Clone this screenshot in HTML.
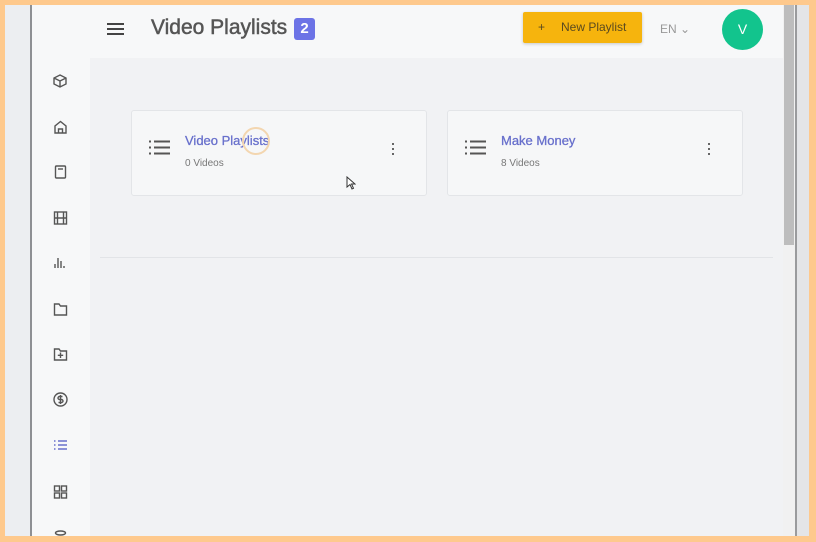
<!DOCTYPE html>
<html><head><style>
*{margin:0;padding:0;box-sizing:border-box}
body{width:816px;height:542px;background:#fec98d;position:relative;overflow:hidden;font-family:"Liberation Sans",sans-serif}
.frame{position:absolute;left:5px;top:5px;width:804px;height:531px;background:#eceef1}
.line{position:absolute;left:30px;top:5px;width:2px;height:531px;background:#8e9094}
.side{position:absolute;left:32px;top:5px;width:58px;height:531px;background:#f7f8f9}
.hdr{position:absolute;left:90px;top:5px;width:693px;height:53px;background:#f7f8f9}
.main{position:absolute;left:90px;top:58px;width:693px;height:478px;background:#f1f2f4}
.sb{position:absolute;left:783px;top:5px;width:12px;height:531px;background:#f1f1f1}
.thumb{position:absolute;left:784px;top:5px;width:10px;height:240px;background:#bdbdbd}
.sbl{position:absolute;left:795px;top:5px;width:2px;height:531px;background:#9a9b9d}
.rgt{position:absolute;left:797px;top:5px;width:12px;height:531px;background:#e4e5e7}
.title{position:absolute;left:151px;top:16px;font-size:21px;color:#555;font-weight:normal;-webkit-text-stroke:0.5px #555}
.badge{position:absolute;left:294px;top:18px;width:21px;height:22px;background:#6c73e6;color:#fff;border-radius:3px;font-size:15px;font-weight:bold;text-align:center;line-height:22px}
.btn{position:absolute;left:523px;top:12px;width:119px;height:31px;background:#f6b40d;border-radius:2px;font-size:12px;color:#5a4a20;line-height:31px;box-shadow:0 1px 3px rgba(0,0,0,.2)}
.en{position:absolute;left:660px;top:22px;font-size:12px;color:#999}
.av{position:absolute;left:722px;top:9px;width:41px;height:41px;border-radius:50%;background:#12c48d;color:#fff;text-align:center;line-height:41px;font-size:14px}
.card{position:absolute;top:110px;height:86px;background:#f6f7f8;border:1px solid #e3e5e8;border-radius:3px}
.ct{position:absolute;top:22px;font-size:13px;color:#6870cc;font-weight:normal;-webkit-text-stroke:0.3px #6870cc}
.cs{position:absolute;top:47px;font-size:10px;color:#777}
.hr{position:absolute;left:100px;top:257px;width:673px;height:1px;background:#e2e4e7}
</style></head><body>
<div class="frame"></div><div class="line"></div><div class="side"></div>
<div class="hdr"></div><div class="main"></div>
<div class="sb"></div><div class="thumb"></div><div class="sbl"></div><div class="rgt"></div>
<svg style="position:absolute;left:107px;top:22px" width="17" height="14"><path d="M0 2H17M0 7H17M0 12H17" stroke="#444" stroke-width="2"/></svg>
<div class="title">Video Playlists</div><div class="badge">2</div>
<div class="btn"><span style="position:absolute;left:15px">+</span><span style="position:absolute;left:38px">New Playlist</span></div>
<div class="en">EN &#8964;</div>
<div class="av">V</div>
<div class="card" style="left:131px;width:296px">
<svg style="position:absolute;left:17px;top:29px" width="21" height="15"><path d="M0 1.5H2M0 7.5H2M0 13.5H2M5 1.5H21M5 7.5H21M5 13.5H21" stroke="#555" stroke-width="2"/></svg>
<div class="ct" style="left:53px">Video Playlists</div>
<div style="position:absolute;left:110px;top:16px;width:28px;height:28px;border:2px solid #f3d6b0;border-radius:50%"></div>
<div class="cs" style="left:53px">0 Videos</div>
<div style="position:absolute;left:260px;top:32px;width:2px;height:12px;background:repeating-linear-gradient(#666 0 2px,transparent 2px 5px)"></div>
</div>
<div class="card" style="left:447px;width:296px">
<svg style="position:absolute;left:17px;top:29px" width="21" height="15"><path d="M0 1.5H2M0 7.5H2M0 13.5H2M5 1.5H21M5 7.5H21M5 13.5H21" stroke="#555" stroke-width="2"/></svg>
<div class="ct" style="left:53px">Make Money</div>
<div class="cs" style="left:53px">8 Videos</div>
<div style="position:absolute;left:260px;top:32px;width:2px;height:12px;background:repeating-linear-gradient(#666 0 2px,transparent 2px 5px)"></div>
</div>
<svg style="position:absolute;left:346px;top:176px" width="10" height="14"><path d="M1 1L1 11L4 8.5L6 13L7.5 12.3L5.5 8L9 8Z" fill="#fff" stroke="#333"/></svg>
<div class="hr"></div>
<svg width="90" height="542" style="position:absolute;left:0;top:0" fill="none" stroke="#555" stroke-width="1.4">
<path d="M60 75L66 78V84L60 87L54 84V78Z M54 78L60 81L66 78M60 81V87"/>
<path d="M55 133V126L60.5 121.5L66 126V133Z M58.5 133V129H62.5V133"/>
<rect x="55.5" y="166" width="10" height="12" rx="1"/><path d="M58 169H63"/>
<rect x="54.5" y="212" width="12" height="12"/><path d="M57.5 212V224M63.5 212V224M54.5 218H66.5"/>
<path d="M55 268V264M58 268V258M61 268V261M64 268V266"/>
<path d="M54.5 304H59L60.5 306H66.5V315H54.5Z"/>
<path d="M54.5 349H59L60.5 351H66.5V360H54.5Z M60.5 352.5V358M57.8 355.3H63.2"/>
<circle cx="60.5" cy="399.5" r="6.5"/><path d="M62.5 396.5H59.5A1.3 1.3 0 0 0 59.5 399.5H61.5A1.3 1.3 0 0 1 61.5 402.5H58.5M60.5 395V404"/>
<path d="M54 441H55.5M54 445H55.5M54 449H55.5M58 441H67M58 445H67M58 449H67" stroke="#6870cc"/>
<rect x="54.5" y="486" width="5" height="5"/><rect x="61.5" y="486" width="5" height="5"/><rect x="54.5" y="493" width="5" height="5"/><rect x="61.5" y="493" width="5" height="5"/>
<ellipse cx="60.5" cy="533" rx="5" ry="2"/>
</svg>
</body></html>
